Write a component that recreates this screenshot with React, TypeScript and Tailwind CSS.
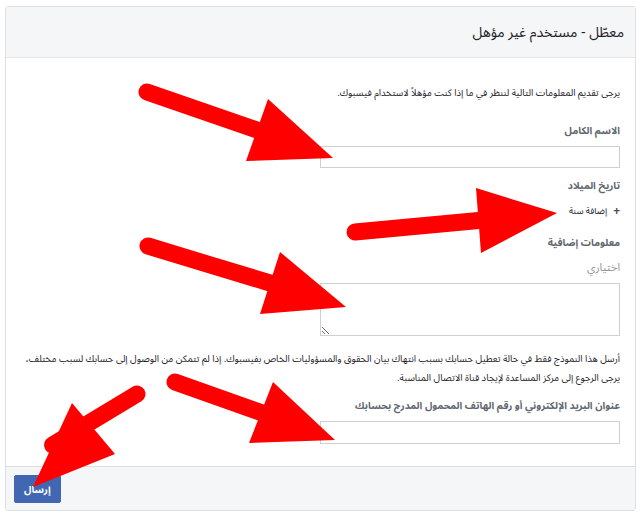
import React from "react";

const arrows = [
  { tail: [147, 92], head: [[268, 99], [333, 158], [246, 161]] },
  { tail: [355, 232], head: [[476, 188], [557, 213], [481, 253]] },
  { tail: [148, 246], head: [[280, 252], [346, 307], [260, 314]] },
  { tail: [175, 382], head: [[273, 382], [335, 440], [249, 443]] },
  { tail: [137, 394], head: [[72, 403], [115, 454], [33, 487]] },
];

function Arrows() {
  return (
    <svg className="pointer-events-none absolute inset-0" width={641} height={517}>
      {arrows.map((a, i) => {
        const [p1, , p3] = a.head;
        const mx = (p1[0] + p3[0]) / 2;
        const my = (p1[1] + p3[1]) / 2;
        return (
          <g key={i} fill="#ff0000" stroke="#ff0000">
            <line x1={a.tail[0]} y1={a.tail[1]} x2={mx} y2={my} strokeWidth={17} strokeLinecap="round" />
            <polygon points={a.head.map((p) => p.join(",")).join(" ")} strokeWidth={0} />
          </g>
        );
      })}
    </svg>
  );
}

export default function App() {
  return (
    <div className="relative h-[517px] w-[641px] bg-white font-['Noto_Sans_Arabic','Noto_Naskh_Arabic','DejaVu_Sans',sans-serif]">
      <div dir="rtl" className="absolute left-[5px] top-[6px] w-[631px] rounded-[3px] border border-[#dddfe2] bg-white">
        {/* header */}
        <div className="flex h-[51px] items-center border-b border-[#e5e5e5] bg-[#f5f6f7] pr-[11px]">
          <h1 className="text-[14px] text-[#1d2129]">معطّل - مستخدم غير مؤهل</h1>
        </div>

        {/* body */}
        <div className="pb-[22px] pl-[7px] pr-[15px] pt-[27px] text-[10px] leading-[16px] text-[#1d2129]">
          <p className="whitespace-nowrap text-[9.5px]">يرجى تقديم المعلومات التالية لننظر في ما إذا كنت مؤهلاً لاستخدام فيسبوك.</p>

          <p className="mt-[22px] font-bold text-[#606770]">الاسم الكامل</p>
          <input className="mt-[7px] block h-[22px] w-[300px] border border-[#ccd0d5] bg-white" />

          <p className="mt-[10px] font-bold text-[#606770]">تاريخ الميلاد</p>
          <div className="mt-[10px] flex h-[16px] items-center gap-[6px] text-[9px]">
            <span className="text-[12px] font-bold leading-none text-[#4b4f56]">+</span>
            <span>إضافة سنة</span>
          </div>

          <p className="mt-[15px] font-bold text-[#606770]">معلومات إضافية</p>
          <p className="mt-[9px] text-[11px] text-[#90949c]">اختياري</p>
          <textarea className="mt-[7px] block h-[53px] w-[300px] border border-[#ccd0d5] bg-white" />

          <div className="mt-[14px] whitespace-nowrap text-[9.5px] leading-[19px]">
            <p>أرسل هذا النموذج فقط في حالة تعطيل حسابك بسبب انتهاك بيان الحقوق والمسؤوليات الخاص بفيسبوك. إذا لم تتمكن من الوصول إلى حسابك لسبب مختلف،</p>
            <p>يرجى الرجوع إلى مركز المساعدة لإيجاد قناة الاتصال المناسبة.</p>
          </div>

          <p className="mt-[10px] whitespace-nowrap font-bold text-[#606770]">عنوان البريد الإلكتروني أو رقم الهاتف المحمول المدرج بحسابك</p>
          <input className="mt-[7px] block h-[23px] w-[300px] border border-[#ccd0d5] bg-white" />
        </div>

        {/* footer */}
        <div className="flex justify-end border-t border-[#dddfe2] bg-[#f5f6f7] pb-[7px] pl-[8px] pt-[8px]">
          <button className="h-[28px] rounded-[2px] border border-[#4267b2] bg-[#4267b2] px-[9px] text-[10px] font-bold text-white">
            إرسال
          </button>
        </div>
      </div>
      <Arrows />
    </div>
  );
}
